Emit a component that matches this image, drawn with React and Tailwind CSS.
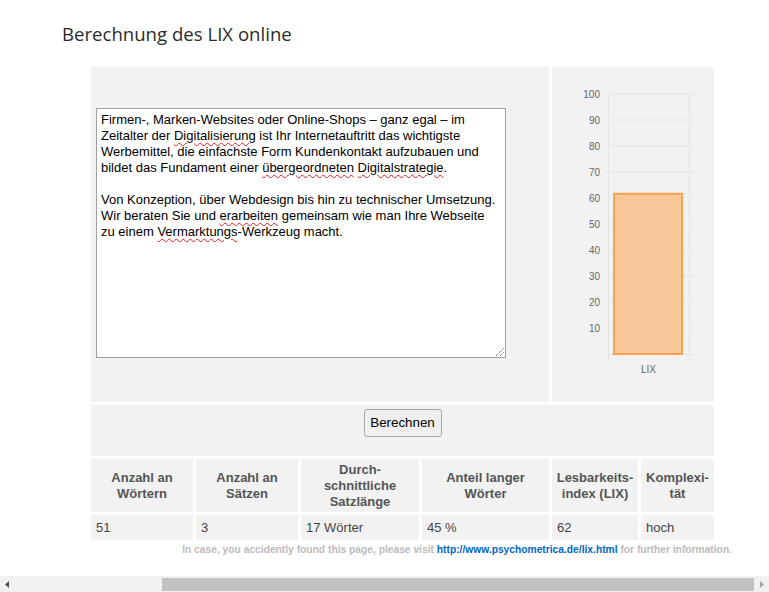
import React from 'react';

const ticks = [100, 90, 80, 70, 60, 50, 40, 30, 20, 10];

// y position inside the chart svg for a LIX value
const yFor = (v) => 287 - 2.6 * v;

function LixChart({ value }) {
  return (
    <svg width="163" height="335" viewBox="0 0 163 335" className="block">
      {ticks.map((t) => (
        <g key={t}>
          <line x1="53" x2="142" y1={yFor(t)} y2={yFor(t)} stroke="#e4e4e4" strokeWidth="1" />
          <text
            x="48"
            y={yFor(t) + 3.5}
            textAnchor="end"
            fontSize="10"
            fill="#666"
            fontFamily="'Liberation Sans', Arial, sans-serif"
          >
            {t}
          </text>
        </g>
      ))}
      <line x1="56.5" x2="56.5" y1={yFor(100)} y2="293" stroke="#e4e4e4" />
      <line x1="137.5" x2="137.5" y1={yFor(100)} y2="293" stroke="#e4e4e4" />
      <line x1="52" x2="142" y1="287.5" y2="287.5" stroke="#e4e4e4" />
      <rect
        x="62"
        y={yFor(value) + 1}
        width="68"
        height={287 - yFor(value) - 1}
        fill="#f8c899"
        stroke="#ffa24f"
        strokeWidth="2"
      />
      <text
        x="96.5"
        y="306"
        textAnchor="middle"
        fontSize="10"
        fill="#666"
        fontFamily="'Liberation Sans', Arial, sans-serif"
      >
        LIX
      </text>
    </svg>
  );
}

function Typo({ children }) {
  return (
    <span className="underline decoration-wavy decoration-[#e02020] decoration-1 underline-offset-[2px]">
      {children}
    </span>
  );
}

const headers = [
  ['Anzahl an', 'Wörtern'],
  ['Anzahl an', 'Sätzen'],
  ['Durch-', 'schnittliche', 'Satzlänge'],
  ['Anteil langer', 'Wörter'],
  ['Lesbarkeits-', 'index (LIX)'],
  ['Komplexi-', 'tät'],
];

const values = ['51', '3', '17 Wörter', '45 %', '62', 'hoch'];

export default function App() {
  return (
    <div className="flex h-[592px] w-[769px] flex-col overflow-hidden bg-white font-['Liberation_Sans',Arial,sans-serif] text-[#333]">
      <h1 className="ml-[62px] mt-[22px] font-['Open_Sans',sans-serif] text-[18.6px] leading-6 text-[#2b2b2b]">
        Berechnung des LIX online
      </h1>

      <div className="ml-[91px] mt-[21px] grid w-[623px] grid-cols-[102px_102px_118px_127px_86px_73px] gap-[3px]">
        <div className="col-span-4 flex h-[335px] items-center bg-[#f2f2f2] pl-[5px]">
          <div className="relative mb-[4px] h-[250px] w-[410px] border border-[#a0a0a0] bg-white px-[4px] pt-[3px] text-[13px] leading-4 text-black">
            <p>
              Firmen-, Marken-Websites oder Online-Shops – ganz egal – im Zeitalter der <Typo>Digitalisierung</Typo> ist Ihr
              Internetauftritt das wichtigste Werbemittel, die einfachste Form Kundenkontakt aufzubauen und bildet das
              Fundament einer <Typo>übergeordneten</Typo> <Typo>Digitalstrategie</Typo>.
            </p>
            <p className="mt-4">
              Von Konzeption, über Webdesign bis hin zu technischer Umsetzung. Wir beraten Sie und <Typo>erarbeiten</Typo>{' '}
              gemeinsam wie man Ihre Webseite zu einem <Typo>Vermarktungs</Typo>-Werkzeug macht.
            </p>
            <svg width="9" height="9" viewBox="0 0 9 9" className="absolute bottom-[1px] right-[1px]">
              <line x1="1" y1="9" x2="9" y2="1" stroke="#555" strokeDasharray="1 1" />
              <line x1="5" y1="9" x2="9" y2="5" stroke="#555" strokeDasharray="1 1" />
            </svg>
          </div>
        </div>
        <div className="col-span-2 h-[335px] bg-[#f2f2f2]">
          <LixChart value={62} />
        </div>

        <div className="col-span-6 flex h-[51px] justify-center bg-[#f2f2f2] pt-[4px]">
          <button
            type="button"
            className="h-[28px] w-[78px] rounded-[3px] border border-[#a8a8a8] bg-[#efefef] text-[13.33px] text-black"
          >
            Berechnen
          </button>
        </div>

        {headers.map((lines, i) => (
          <div
            key={i}
            className="flex h-[53px] flex-col items-center justify-center bg-[#f2f2f2] text-center text-[13px] font-bold leading-4 text-[#555]"
          >
            {lines.map((l) => (
              <span key={l}>{l}</span>
            ))}
          </div>
        ))}

        {values.map((v, i) => (
          <div key={i} className="flex h-[25px] items-center bg-[#f2f2f2] pl-[5px] text-[13px] text-[#444]">
            {v}
          </div>
        ))}
      </div>

      <p className="mt-[3px] pr-[37px] text-right text-[10.25px] font-bold leading-[14px] text-[#bbb]">
        In case, you accidently found this page, please visit{' '}
        <a href="#lix" className="text-[#0066cc]">
          http://www.psychometrica.de/lix.html
        </a>{' '}
        for further information.
      </p>

      {/* horizontal page scrollbar */}
      <div className="mt-auto flex h-[16px] items-center bg-[#f1f1f1]">
        <div className="flex w-[13px] justify-center">
          <svg width="4" height="7" viewBox="0 0 4 7">
            <path d="M4 0 L0 3.5 L4 7 Z" fill="#505050" />
          </svg>
        </div>
        <div className="ml-[149px] h-[13px] w-[592px] bg-[#c1c1c1]" />
        <div className="flex flex-1 justify-center">
          <svg width="4" height="7" viewBox="0 0 4 7">
            <path d="M0 0 L4 3.5 L0 7 Z" fill="#a3a3a3" />
          </svg>
        </div>
      </div>
    </div>
  );
}
